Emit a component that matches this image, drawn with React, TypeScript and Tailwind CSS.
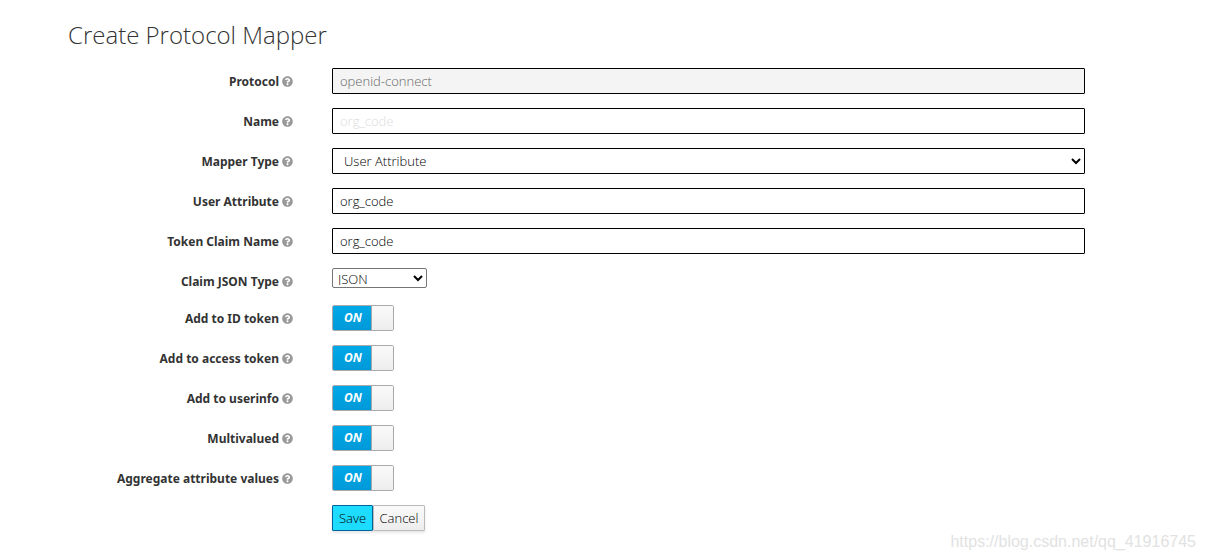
import React from 'react';
import { FaQuestionCircle } from 'react-icons/fa';

const SWITCHES = [
  { id: 'id-token', label: 'Add to ID token' },
  { id: 'access-token', label: 'Add to access token' },
  { id: 'userinfo', label: 'Add to userinfo' },
  { id: 'multivalued', label: 'Multivalued' },
  { id: 'aggregate', label: 'Aggregate attribute values' },
];

const FIELD = 'block w-full h-[26px] border border-black rounded-[1px] pl-[7px] text-[13px] leading-6 font-light';

type RowProps = {
  id: string;
  label: string;
  short?: boolean;
  children: React.ReactNode;
};

const Row = ({ id, label, short, children }: RowProps) => (
  <div className={`flex items-start ${short ? 'h-[23px]' : 'h-[26px]'}`}>
    <div className="w-[225px] shrink-0 mr-[39px] flex items-center justify-end gap-[3px] h-[26px]">
      <label htmlFor={id} className="pt-[2px] text-xs leading-6 font-bold text-[#333] whitespace-nowrap font-['Noto_Sans',sans-serif]">{label}</label>
      <FaQuestionCircle className="w-[11px] h-[11px] text-[#999]" />
    </div>
    <div className="flex-1 min-w-0">{children}</div>
  </div>
);

const Switch = ({ id }: { id: string }) => (
  <label className="relative flex w-[62px] h-[26px] border border-[#aaa] rounded-[2px] overflow-hidden cursor-pointer">
    <input id={id} type="checkbox" defaultChecked className="sr-only peer" />
    <span className="w-[38px] pl-[2px] bg-linear-to-b from-[#00a8e8] to-[#0099d8] text-white text-xs leading-6 font-bold italic text-center">ON</span>
    <span className="flex-1 border-l border-[#aaa] bg-linear-to-b from-[#fafafa] to-[#ededed]" />
  </label>
);

export default function App() {
  return (
    <main className="relative bg-white pt-[18px] pb-7 pl-[68px] pr-[120px] font-['Open_Sans','Noto_Sans',sans-serif] text-[#333]">
      <h1 className="text-2xl leading-[34px] font-light mb-4">Create Protocol Mapper</h1>
      <form className="flex flex-col gap-[14px]" onSubmit={(e) => e.preventDefault()}>
        <Row id="protocol" label="Protocol">
          <input id="protocol" type="text" disabled defaultValue="openid-connect" className={`${FIELD} bg-[#f4f4f4] text-[#666]`} />
        </Row>
        <Row id="name" label="Name">
          <input id="name" type="text" placeholder="org_code" className={`${FIELD} placeholder:text-[#ddd]`} />
        </Row>
        <Row id="mapper-type" label="Mapper Type">
          <select id="mapper-type" className={`${FIELD} bg-white text-black`}>
            <option>User Attribute</option>
          </select>
        </Row>
        <Row id="user-attribute" label="User Attribute">
          <input id="user-attribute" type="text" defaultValue="org_code" className={`${FIELD} text-black`} />
        </Row>
        <Row id="claim-name" label="Token Claim Name">
          <input id="claim-name" type="text" defaultValue="org_code" className={`${FIELD} text-black`} />
        </Row>
        <Row id="json-type" label="Claim JSON Type" short>
          <select id="json-type" className="block w-[95px] h-5 pl-px pb-[2px] bg-white border border-[#767676] rounded-[2px] text-[13px] leading-4 font-light text-black">
            <option>JSON</option>
          </select>
        </Row>
        {SWITCHES.map(({ id, label }) => (
          <Row key={id} id={id} label={label}>
            <Switch id={id} />
          </Row>
        ))}
        <div className="flex pl-[264px] text-[13px] leading-6 font-light">
          <button type="submit" className="w-[41px] h-[26px] border border-[#00659c] rounded-[1px] bg-[#1edcff] text-black shadow-[0_2px_3px_rgba(3,3,3,0.1)]">Save</button>
          <button type="button" className="w-[52px] h-[26px] border border-[#bbb] rounded-[1px] bg-linear-to-b from-[#fafafa] to-[#ededed] text-black shadow-[0_2px_3px_rgba(3,3,3,0.1)]">Cancel</button>
        </div>
      </form>
      <span className="absolute right-[9px] bottom-[5px] text-base leading-6 text-[#e2e2e2] font-['Liberation_Sans',sans-serif]">https://blog.csdn.net/qq_41916745</span>
    </main>
  );
}
